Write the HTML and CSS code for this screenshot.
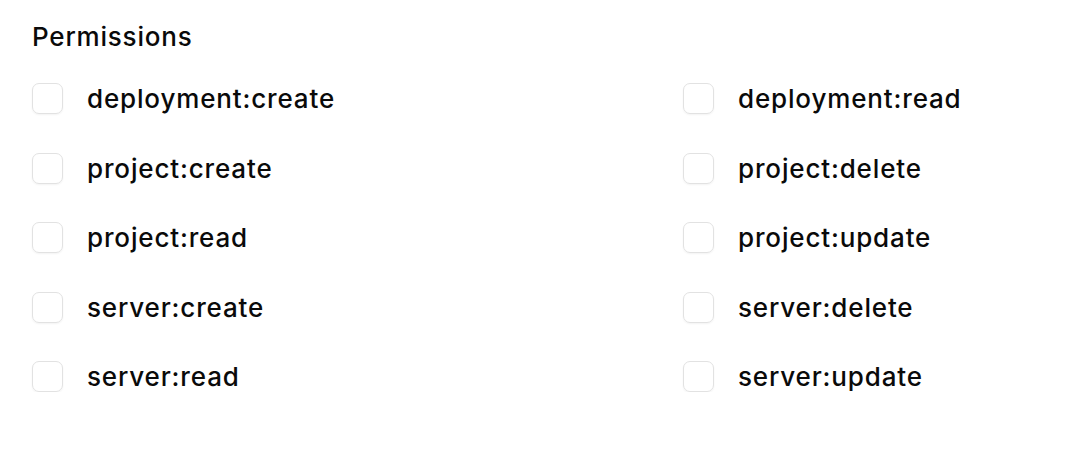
FILE: index.html
```html
<!DOCTYPE html>
<html lang="en">
<head>
<meta charset="utf-8">
<link rel="stylesheet" href="styles.css">
</head>
<body>
<div class="field">
  <div class="label">Permissions</div>
  <div class="grid">
    <label class="item"><span class="box"></span><span class="text">deployment:create</span></label>
    <label class="item"><span class="box"></span><span class="text">deployment:read</span></label>
    <label class="item"><span class="box"></span><span class="text">project:create</span></label>
    <label class="item"><span class="box"></span><span class="text">project:delete</span></label>
    <label class="item"><span class="box"></span><span class="text">project:read</span></label>
    <label class="item"><span class="box"></span><span class="text">project:update</span></label>
    <label class="item"><span class="box"></span><span class="text">server:create</span></label>
    <label class="item"><span class="box"></span><span class="text">server:delete</span></label>
    <label class="item"><span class="box"></span><span class="text">server:read</span></label>
    <label class="item"><span class="box"></span><span class="text">server:update</span></label>
  </div>
</div>
</body>
</html>
```
FILE: styles.css
```css
html, body {
  margin: 0;
  padding: 0;
  background: #ffffff;
  font-family: Inter, "Noto Sans", sans-serif;
  color: #0a0a0a;
}
.field {
  padding: 21px 32px 0 32px;
}
.label {
  font-size: 26px;
  font-weight: 450;
  letter-spacing: 0.8px;
  line-height: 32px;
  margin-bottom: 30px;
}
.grid {
  display: grid;
  grid-template-columns: 651px 1fr;
  row-gap: 38.5px;
}
.item {
  display: flex;
  align-items: center;
  gap: 24px;
  height: 31px;
}
.box {
  width: 29px;
  height: 29px;
  border: 1px solid #e2e2e2;
  border-radius: 7px;
  box-shadow: 0 1px 2px rgba(0,0,0,0.05);
  flex: none;
}
.text {
  font-size: 26px;
  font-weight: 450;
  letter-spacing: 0.85px;
  line-height: 31px;
}
```
